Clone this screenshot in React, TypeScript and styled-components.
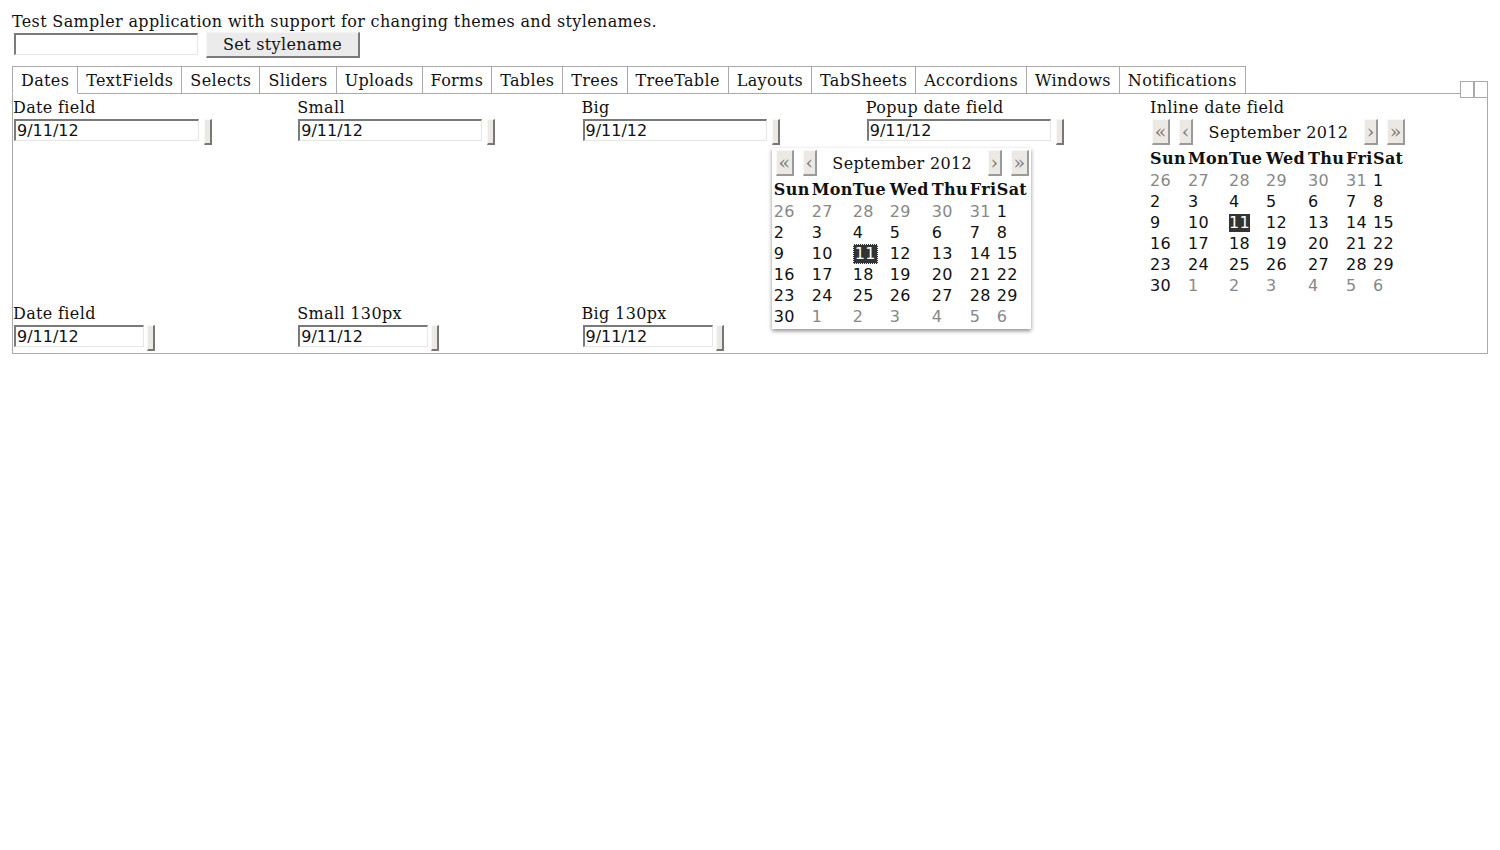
import React from 'react'
import styled, { createGlobalStyle } from 'styled-components'

const GlobalStyle = createGlobalStyle`
  html, body {
    margin: 0;
    padding: 0;
    background: #fff;
  }
  body {
    font-family: 'DejaVu Serif', 'Liberation Serif', serif;
    font-size: 16px;
    letter-spacing: 0.35px;
    color: #111;
  }
`

const Page = styled.div`
  padding: 12px 12px 0 12px;
  width: 1476px;
`

const Intro = styled.div`
  line-height: 20px;
`

const StyleRow = styled.div`
  display: flex;
  align-items: flex-start;
  gap: 8px;
  margin-top: 1px;
  padding-left: 2px;
`

const TextInput = styled.input<{ $w: number }>`
  box-sizing: border-box;
  width: ${(p) => p.$w}px;
  height: 22px;
  margin: 0;
  padding: 0 1px;
  border-style: solid;
  border-width: 2px 1px 1px 2px;
  border-color: #7a7a7a #e8e6e2 #e8e6e2 #7a7a7a;
  font-family: 'DejaVu Sans', 'Liberation Sans', sans-serif;
  font-size: 16px;
  letter-spacing: 0;
  color: #111;
  background: #fff;
  outline: none;
`

const PlainButton = styled.button`
  box-sizing: border-box;
  height: 26px;
  width: 154px;
  margin: -1px 0 0 0;
  padding: 0;
  background: #ebebeb;
  border-style: solid;
  border-width: 1px 2px 2px 1px;
  border-color: #f4f4f4 #7a7a7a #7a7a7a #f4f4f4;
  font-family: 'DejaVu Serif', 'Liberation Serif', serif;
  font-size: 16px;
  letter-spacing: 0.35px;
  color: #111;
`

const TabBar = styled.div`
  display: flex;
  margin-top: 8px;
  height: 28px;
`

const Tab = styled.div<{ $selected?: boolean; $first?: boolean }>`
  box-sizing: border-box;
  height: 28px;
  padding: 1px 8px 0 8px;
  line-height: 26px;
  border-top: 1px solid #aaa;
  border-right: 1px solid #aaa;
  border-left: ${(p) => (p.$first ? '1px solid #aaa' : 'none')};
  border-bottom: ${(p) => (p.$selected ? '1px solid transparent' : '1px solid #aaa')};
  white-space: nowrap;
`

const TabFiller = styled.div`
  flex: 1;
  border-bottom: 1px solid #aaa;
`

const Scroller = styled.div`
  display: flex;
  align-self: flex-end;
  margin-bottom: -4px;
`

const ScrollBox = styled.div`
  box-sizing: border-box;
  width: 14px;
  height: 17px;
  border: 1px solid #aaa;
  background: #fff;
`

const Panel = styled.div`
  box-sizing: border-box;
  border: 1px solid #aaa;
  border-top: none;
  padding: 4px 0 2px 0;
`

const FieldGrid = styled.div<{ $rowH?: number }>`
  display: grid;
  grid-template-columns: repeat(5, 284.25px);
  align-items: start;
  ${(p) => (p.$rowH ? `height: ${p.$rowH}px;` : '')}
`

const Field = styled.div`
  position: relative;
`

const Caption = styled.div`
  line-height: 20px;
  white-space: nowrap;
`

const FieldRow = styled.div`
  display: flex;
  align-items: flex-start;
  margin-top: 1px;
  padding-left: 1px;
`

const PickerButton = styled.div<{ $gap: number }>`
  box-sizing: border-box;
  width: 8px;
  height: 26px;
  margin-left: ${(p) => p.$gap}px;
  background: #ece9e4;
  border-style: solid;
  border-width: 1px 2px 2px 1px;
  border-color: #f8f8f8 #777 #777 #f8f8f8;
`

const Popup = styled.div`
  position: absolute;
  left: -94px;
  top: 50px;
  width: 259px;
  background: #fff;
  box-shadow: 0 2px 4px rgba(0, 0, 0, 0.45);
  padding: 2px;
  box-sizing: border-box;
  z-index: 2;
`

const CalBox = styled.div`
  width: 255px;
`

const CalHeader = styled.div`
  display: flex;
  align-items: center;
  height: 26px;
`

const NavButton = styled.div<{ $w: number; $ml: number }>`
  box-sizing: border-box;
  width: ${(p) => p.$w}px;
  height: 26px;
  margin-left: ${(p) => p.$ml}px;
  padding-bottom: 2px;
  background: #ece9e4;
  border-style: solid;
  border-width: 1px 2px 2px 1px;
  border-color: #f8f8f8 #9a9a9a #9a9a9a #f8f8f8;
  display: flex;
  align-items: center;
  justify-content: center;
  font-family: 'DejaVu Serif', serif;
  font-size: 19px;
  letter-spacing: 0;
  color: #777;
`

const MonthTitle = styled.div`
  flex: 1;
  text-align: center;
  white-space: nowrap;
`

const CalTable = styled.table`
  border-collapse: collapse;
  table-layout: fixed;
  width: 255px;
  margin-top: 4px;
`

const DayHead = styled.th<{ $w: number }>`
  width: ${(p) => p.$w}px;
  padding: 0;
  text-align: left;
  font-weight: bold;
  height: 21px;
  line-height: 20px;
  vertical-align: top;
  white-space: nowrap;
  overflow: visible;
`

const DayCell = styled.td<{ $muted?: boolean }>`
  padding: 0;
  height: 21px;
  line-height: 21px;
  font-family: 'DejaVu Sans', 'Liberation Sans', sans-serif;
  letter-spacing: 0.2px;
  color: ${(p) => (p.$muted ? '#888' : '#111')};
`

const Selected = styled.span<{ $focus?: boolean }>`
  display: inline-block;
  line-height: 18px;
  padding: ${(p) => (p.$focus ? '0 1px' : '0')};
  background: #333;
  color: #fff;
  border: ${(p) => (p.$focus ? '1px dotted #eee' : 'none')};
`

const tabs = [
  'Dates',
  'TextFields',
  'Selects',
  'Sliders',
  'Uploads',
  'Forms',
  'Tables',
  'Trees',
  'TreeTable',
  'Layouts',
  'TabSheets',
  'Accordions',
  'Windows',
  'Notifications',
]

const weekdays: [string, number][] = [
  ['Sun', 38],
  ['Mon', 41],
  ['Tue', 37],
  ['Wed', 42],
  ['Thu', 38],
  ['Fri', 27],
  ['Sat', 32],
]

const weeks: { d: number; muted?: boolean }[][] = [
  [{ d: 26, muted: true }, { d: 27, muted: true }, { d: 28, muted: true }, { d: 29, muted: true }, { d: 30, muted: true }, { d: 31, muted: true }, { d: 1 }],
  [{ d: 2 }, { d: 3 }, { d: 4 }, { d: 5 }, { d: 6 }, { d: 7 }, { d: 8 }],
  [{ d: 9 }, { d: 10 }, { d: 11 }, { d: 12 }, { d: 13 }, { d: 14 }, { d: 15 }],
  [{ d: 16 }, { d: 17 }, { d: 18 }, { d: 19 }, { d: 20 }, { d: 21 }, { d: 22 }],
  [{ d: 23 }, { d: 24 }, { d: 25 }, { d: 26 }, { d: 27 }, { d: 28 }, { d: 29 }],
  [{ d: 30 }, { d: 1, muted: true }, { d: 2, muted: true }, { d: 3, muted: true }, { d: 4, muted: true }, { d: 5, muted: true }, { d: 6, muted: true }],
]

const Calendar = ({ focus }: { focus?: boolean }) => (
  <CalBox>
    <CalHeader>
      <NavButton $w={18} $ml={2}>«</NavButton>
      <NavButton $w={14} $ml={9}>‹</NavButton>
      <MonthTitle>September 2012</MonthTitle>
      <NavButton $w={14} $ml={0}>›</NavButton>
      <NavButton $w={18} $ml={9}>»</NavButton>
    </CalHeader>
    <CalTable>
      <thead>
        <tr>
          {weekdays.map(([w, width]) => (
            <DayHead key={w} $w={width}>
              {w}
            </DayHead>
          ))}
        </tr>
      </thead>
      <tbody>
        {weeks.map((week, i) => (
          <tr key={i}>
            {week.map((c, j) => (
              <DayCell key={j} $muted={c.muted}>
                {!c.muted && c.d === 11 ? <Selected $focus={focus}>{c.d}</Selected> : c.d}
              </DayCell>
            ))}
          </tr>
        ))}
      </tbody>
    </CalTable>
  </CalBox>
)

const InlineCal = styled.div`
  margin-top: 1px;
`

const DateField = ({ label, width, gap }: { label: string; width: number; gap: number }) => (
  <Field>
    <Caption>{label}</Caption>
    <FieldRow>
      <TextInput $w={width} defaultValue="9/11/12" />
      <PickerButton $gap={gap} />
    </FieldRow>
  </Field>
)

const App = () => {
  return (
    <Page>
      <GlobalStyle />
      <Intro>Test Sampler application with support for changing themes and stylenames.</Intro>
      <StyleRow>
        <TextInput $w={184} defaultValue="" />
        <PlainButton>Set stylename</PlainButton>
      </StyleRow>
      <TabBar>
        {tabs.map((t, i) => (
          <Tab key={t} $first={i === 0} $selected={i === 0}>
            {t}
          </Tab>
        ))}
        <TabFiller />
        <Scroller>
          <ScrollBox />
          <ScrollBox />
        </Scroller>
      </TabBar>
      <Panel>
        <FieldGrid $rowH={206}>
          <DateField label="Date field" width={185} gap={5} />
          <DateField label="Small" width={184} gap={5} />
          <DateField label="Big" width={184} gap={5} />
          <Field>
            <DateField label="Popup date field" width={184} gap={5} />
            <Popup>
              <Calendar focus />
            </Popup>
          </Field>
          <Field>
            <Caption>Inline date field</Caption>
            <InlineCal>
              <Calendar />
            </InlineCal>
          </Field>
        </FieldGrid>
        <FieldGrid>
          <DateField label="Date field" width={130} gap={3} />
          <DateField label="Small 130px" width={130} gap={3} />
          <DateField label="Big 130px" width={130} gap={3} />
        </FieldGrid>
      </Panel>
    </Page>
  )
}

export default App
